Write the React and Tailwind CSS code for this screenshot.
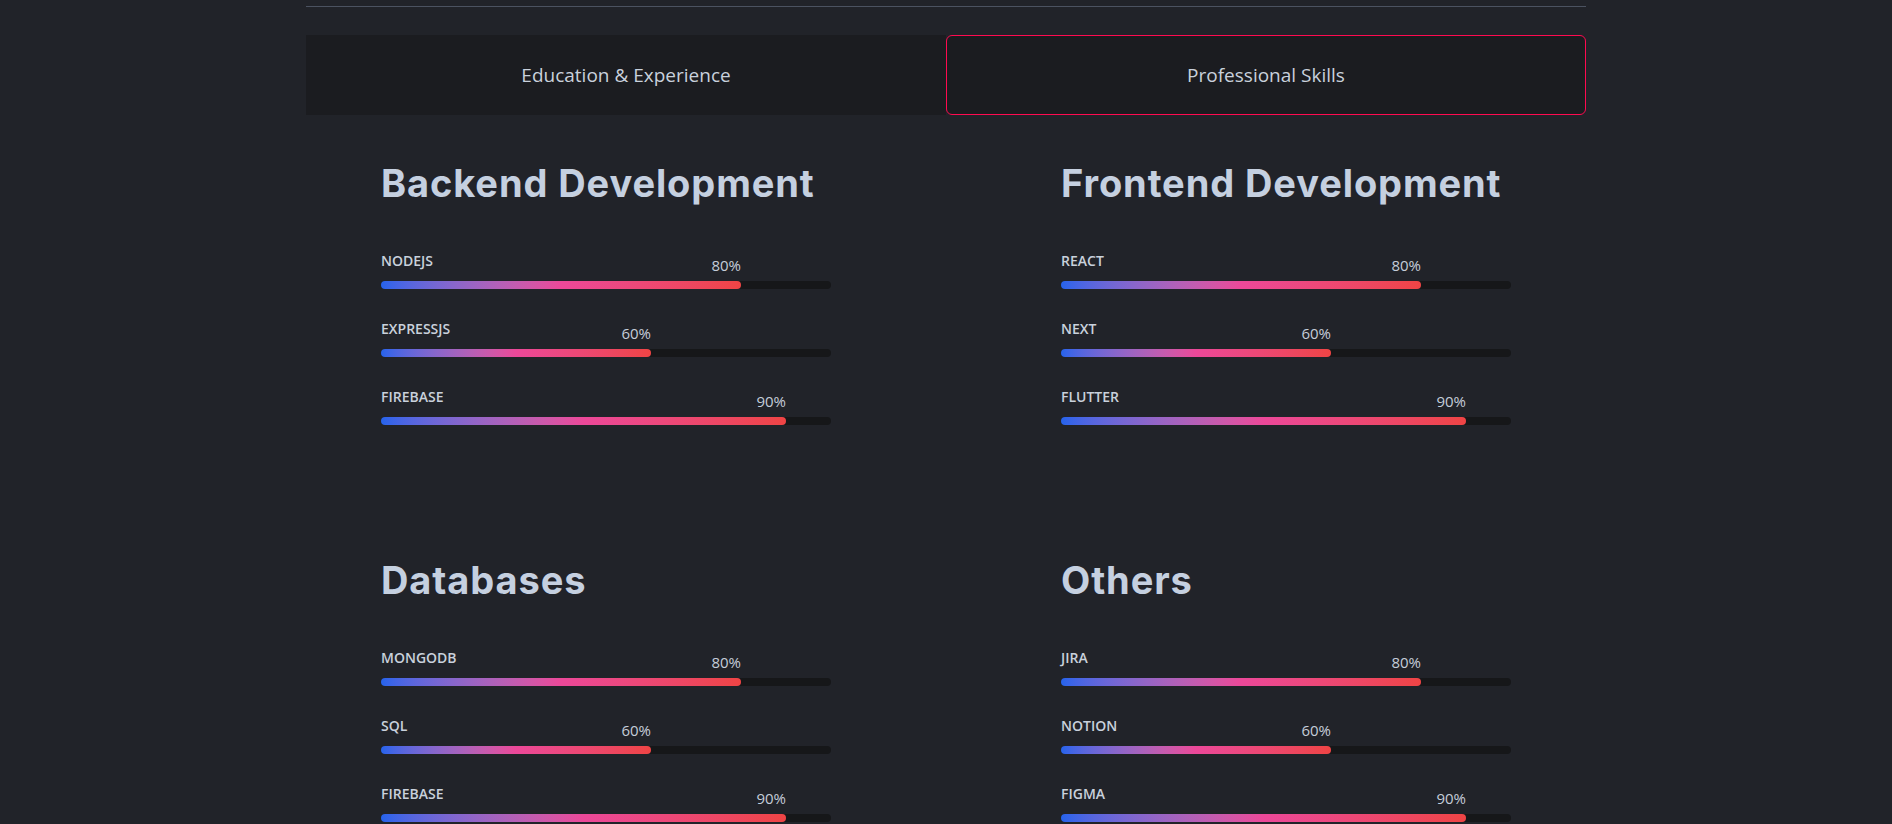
import { useState } from 'react'

const sections = [
    {
        title: 'Backend Development',
        skills: [
            { name: 'NODEJS', value: 80 },
            { name: 'EXPRESSJS', value: 60 },
            { name: 'FIREBASE', value: 90 },
        ],
    },
    {
        title: 'Frontend Development',
        skills: [
            { name: 'REACT', value: 80 },
            { name: 'NEXT', value: 60 },
            { name: 'FLUTTER', value: 90 },
        ],
    },
    {
        title: 'Databases',
        skills: [
            { name: 'MONGODB', value: 80 },
            { name: 'SQL', value: 60 },
            { name: 'FIREBASE', value: 90 },
        ],
    },
    {
        title: 'Others',
        skills: [
            { name: 'JIRA', value: 80 },
            { name: 'NOTION', value: 60 },
            { name: 'FIGMA', value: 90 },
        ],
    },
]

const SkillBar = ({ name, value }) => {
    return (
        <div className="w-full">
            <div className="grid mb-[6px]">
                <span className="col-start-1 row-start-1 self-start text-[14px] leading-5 font-semibold text-[#c9d1dc]">
                    {name}
                </span>
                <div
                    className="col-start-1 row-start-1 pt-[4px] text-right text-[15px] leading-5 text-[#c5cdd9]"
                    style={{ width: `${value}%` }}
                >
                    {value}%
                </div>
            </div>
            <div className="h-2 w-full rounded-full bg-[#161719]">
                <div
                    className="h-2 rounded-full bg-gradient-to-r from-[#2563eb] via-[#ec4899] to-[#ef4444]"
                    style={{ width: `${value}%` }}
                ></div>
            </div>
        </div>
    )
}

const SkillSection = ({ title, skills }) => {
    return (
        <div>
            <h2 className="font-['Inter',sans-serif] text-[38px] leading-[44px] font-bold text-[#c5d0e0] tracking-[0.9px] whitespace-nowrap">
                {title}
            </h2>
            <div className="mt-[46px] flex flex-col gap-[30px]">
                {skills.map((skill) => (
                    <SkillBar key={skill.name} {...skill} />
                ))}
            </div>
        </div>
    )
}

const App = () => {
    const [tab, setTab] = useState('skills')

    return (
        <div className="min-h-screen bg-[#212329] font-['Open_Sans',sans-serif]">
            <div className="mx-auto max-w-[1280px] pb-40">
                <div className="h-[7px] border-b border-[#4b5260]"></div>

                <div className="mt-7 grid grid-cols-2 h-20">
                    <button
                        onClick={() => setTab('education')}
                        className={`flex items-center justify-center bg-[#1b1c20] text-[19px] text-[#c9d1dc] ${tab === 'education' ? 'border border-[#ff0a50] rounded-md' : ''}`}
                    >
                        Education &amp; Experience
                    </button>
                    <button
                        onClick={() => setTab('skills')}
                        className={`flex items-center justify-center bg-[#1b1c20] text-[19px] text-[#c9d1dc] ${tab === 'skills' ? 'border border-[#ff0a50] rounded-md' : ''}`}
                    >
                        Professional Skills
                    </button>
                </div>

                <div className="mt-[46px] px-[75px] grid grid-cols-2 gap-x-[230px] gap-y-[133px]">
                    {sections.map((section) => (
                        <SkillSection key={section.title} {...section} />
                    ))}
                </div>
            </div>
        </div>
    )
}

export default App
